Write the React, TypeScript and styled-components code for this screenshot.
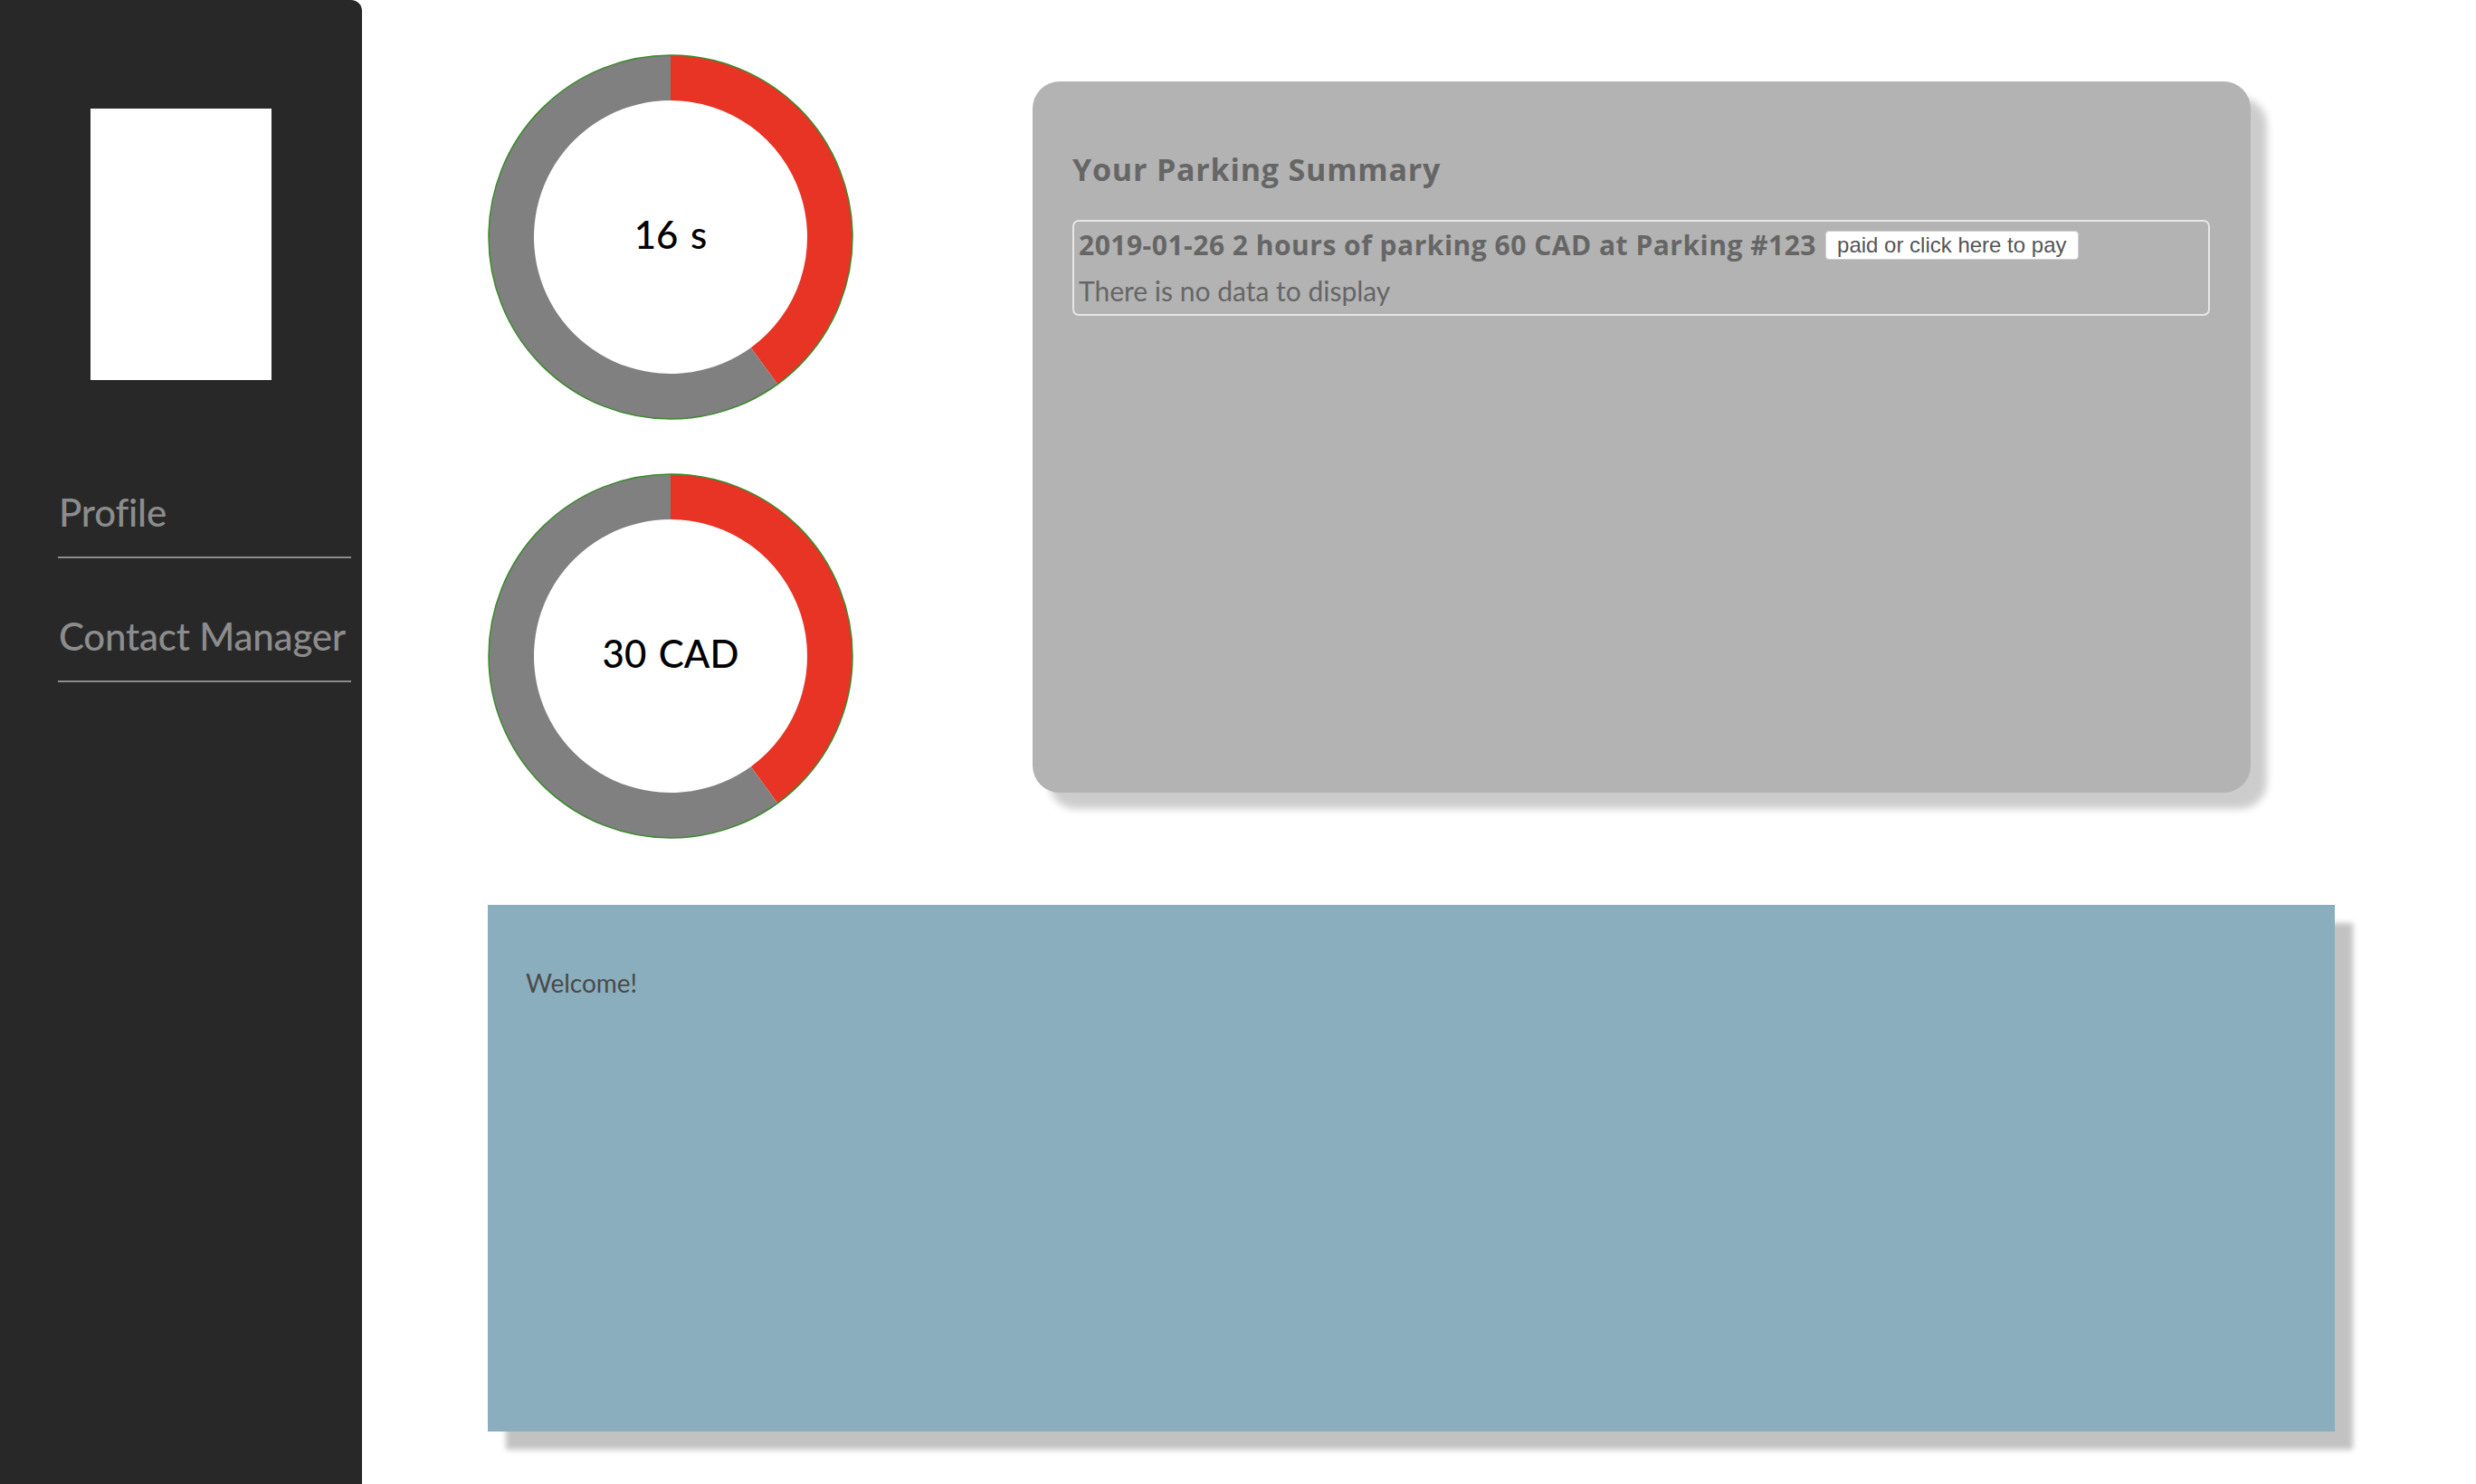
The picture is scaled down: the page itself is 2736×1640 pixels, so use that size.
import React from "react";
import styled, { createGlobalStyle } from "styled-components";

const Global = createGlobalStyle`
  html, body { margin: 0; padding: 0; background: #ffffff; }
  body { font-family: "Lato", "Noto Sans", sans-serif; }
  #root { width: 2736px; height: 1640px; overflow: hidden; }
`;

const Page = styled.div`
  display: flex;
  width: 2736px;
  height: 1640px;
  background: #ffffff;
`;

const Sidebar = styled.aside`
  width: 400px;
  flex: 0 0 400px;
  height: 1640px;
  background: #282828;
  border-top-right-radius: 12px;
  padding-top: 120px;
  box-sizing: border-box;
  display: flex;
  flex-direction: column;
`;

const Logo = styled.div`
  width: 200px;
  height: 300px;
  margin-left: 100px;
  background: #ffffff;
`;

const Nav = styled.nav`
  display: flex;
  flex-direction: column;
  gap: 65px;
  margin-top: 125px;
  margin-left: 64px;
  width: 324px;
`;

const NavItem = styled.a`
  display: block;
  font-family: "Lato", "Noto Sans", sans-serif;
  font-size: 42px;
  line-height: 42px;
  font-weight: 500;
  letter-spacing: -0.2px;
  color: #8c8c8c;
  text-decoration: none;
  padding-left: 1px;
  padding-bottom: 28px;
  border-bottom: 2px solid #8c8c8c;
  white-space: nowrap;
`;

const Main = styled.main`
  flex: 1;
  padding-left: 139px;
  padding-top: 60px;
  display: flex;
  flex-direction: column;
`;

const TopRow = styled.div`
  display: flex;
  align-items: flex-start;
`;

const DonutColumn = styled.div`
  display: flex;
  flex-direction: column;
  gap: 59px;
`;

const DonutWrap = styled.div`
  display: grid;
  width: 404px;
  height: 404px;
  & > * { grid-area: 1 / 1; }
`;

const DonutLabel = styled.div`
  align-self: center;
  justify-self: center;
  font-family: "Lato", "Noto Sans", sans-serif;
  font-size: 42px;
  font-weight: 500;
  color: #000000;
  line-height: 1;
  margin-top: -6px;
  word-spacing: 3px;
`;

const Card = styled.section`
  margin-left: 198px;
  margin-top: 30px;
  width: 1346px;
  height: 786px;
  box-sizing: border-box;
  background: #b3b3b3;
  border-radius: 30px;
  box-shadow: 18px 18px 8px rgba(0, 0, 0, 0.2);
  padding: 78px 45px 0 44px;
`;

const CardTitle = styled.h2`
  margin: 0;
  font-family: "Open Sans", "Noto Sans", sans-serif;
  font-size: 34px;
  line-height: 38px;
  font-weight: 700;
  letter-spacing: 0.8px;
  color: #666666;
`;

const Entry = styled.div`
  margin-top: 37px;
  border: 2px solid #e6e6e6;
  border-radius: 7px;
  padding: 8px 5px 10px 5px;
`;

const EntryRow = styled.div`
  display: flex;
  align-items: center;
  gap: 10px;
  min-height: 36px;
`;

const EntryText = styled.span<{ $bold?: boolean }>`
  font-family: ${(p) => (p.$bold ? '"Open Sans", "Noto Sans", sans-serif' : '"Lato", "Noto Sans", sans-serif')};
  font-size: ${(p) => (p.$bold ? "30px" : "30px")};
  letter-spacing: ${(p) => (p.$bold ? "0.5px" : "0")};
  line-height: 32px;
  font-weight: ${(p) => (p.$bold ? 700 : 400)};
  color: #666666;
  white-space: nowrap;
`;

const PayButton = styled.button`
  height: 32px;
  padding: 0 12px;
  background: #ffffff;
  border: 1px solid #d0d0d0;
  border-radius: 4px;
  font-family: "Liberation Sans", Arial, sans-serif;
  font-size: 24px;
  color: #555555;
  cursor: pointer;
`;

const EmptyNote = styled.div`
  margin-top: 16px;
`;

const Welcome = styled.section`
  margin-top: 73px;
  width: 2041px;
  height: 582px;
  box-sizing: border-box;
  background: #8aaebd;
  box-shadow: 20px 20px 6px rgba(0, 0, 0, 0.24);
  padding: 72px 42px;
`;

const WelcomeText = styled.p`
  margin: 0;
  font-family: "Lato", "Noto Sans", sans-serif;
  font-size: 28px;
  line-height: 28px;
  color: #4a4a4a;
`;

function polar(cx: number, cy: number, r: number, deg: number) {
  const a = (deg * Math.PI) / 180;
  return [cx + r * Math.sin(a), cy - r * Math.cos(a)];
}

function sector(cx: number, cy: number, ro: number, ri: number, a0: number, a1: number) {
  const large = a1 - a0 > 180 ? 1 : 0;
  const [x0, y0] = polar(cx, cy, ro, a0);
  const [x1, y1] = polar(cx, cy, ro, a1);
  const [x2, y2] = polar(cx, cy, ri, a1);
  const [x3, y3] = polar(cx, cy, ri, a0);
  return `M${x0} ${y0} A${ro} ${ro} 0 ${large} 1 ${x1} ${y1} L${x2} ${y2} A${ri} ${ri} 0 ${large} 0 ${x3} ${y3} Z`;
}

const Donut: React.FC<{ label: string; fraction: number }> = ({ label, fraction }) => {
  const c = 202;
  const ro = 201;
  const ri = 151;
  const split = fraction * 360;
  return (
    <DonutWrap>
      <svg width="404" height="404" viewBox="0 0 404 404">
        <circle cx={c} cy={c} r={ri} fill="#ffffff" />
        <path d={sector(c, c, ro, ri, 0, split)} fill="#e83425" />
        <path d={sector(c, c, ro, ri, split, 359.999)} fill="#808080" />
        <circle cx={c} cy={c} r={ro} fill="none" stroke="#3b8a2c" strokeWidth="1.5" />
      </svg>
      <DonutLabel>{label}</DonutLabel>
    </DonutWrap>
  );
};

export default function App() {
  return (
    <>
      <Global />
      <Page>
        <Sidebar>
          <Logo />
          <Nav>
            <NavItem href="#">Profile</NavItem>
            <NavItem href="#">Contact Manager</NavItem>
          </Nav>
        </Sidebar>
        <Main>
          <TopRow>
            <DonutColumn>
              <Donut label="16 s" fraction={0.4} />
              <Donut label="30 CAD" fraction={0.4} />
            </DonutColumn>
            <Card>
              <CardTitle>Your Parking Summary</CardTitle>
              <Entry>
                <EntryRow>
                  <EntryText $bold>2019-01-26 2 hours of parking 60 CAD at Parking #123</EntryText>
                  <PayButton>paid or click here to pay</PayButton>
                </EntryRow>
                <EmptyNote>
                  <EntryText>There is no data to display</EntryText>
                </EmptyNote>
              </Entry>
            </Card>
          </TopRow>
          <Welcome>
            <WelcomeText>Welcome!</WelcomeText>
          </Welcome>
        </Main>
      </Page>
    </>
  );
}
